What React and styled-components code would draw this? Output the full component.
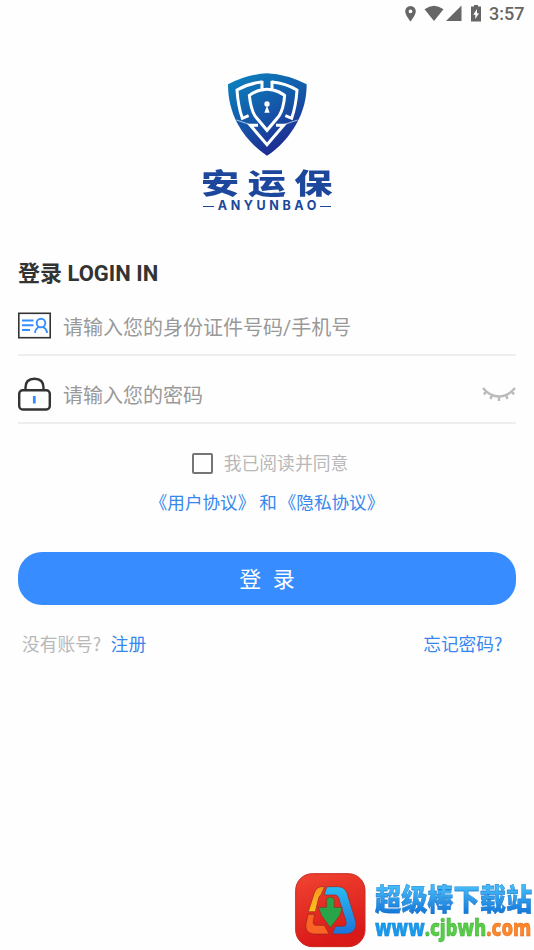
import React from "react";
import styled, { createGlobalStyle } from "styled-components";

const Global = createGlobalStyle`
  * { box-sizing: border-box; }
  body { margin: 0; background: #fff; overflow: hidden; }
`;

const Screen = styled.div`
  width: 534px;
  height: 950px;
  display: flex;
  flex-direction: column;
  background: #fefefe;
  font-family: Roboto, "Noto Sans CJK SC", sans-serif;
  white-space: nowrap;
`;

const StatusBar = styled.header`
  height: 28px;
  padding-right: 9px;
  display: flex;
  justify-content: flex-end;
  align-items: center;
  color: #666;
`;

const Clock = styled.span`
  width: 36px;
  margin-left: 7px;
  font-size: 18px;
  font-weight: 500;
  line-height: 28px;
`;

const Brand = styled.div`
  height: 232px;
  padding-top: 44px;
  display: flex;
  flex-direction: column;
  align-items: center;
  color: #1c479c;
`;

const BrandName = styled.div`
  margin: 10px 0 0 8px;
  height: 32px;
  font-family: "Noto Sans CJK SC", sans-serif;
  font-size: 31px;
  font-weight: 900;
  line-height: 29px;
  letter-spacing: 7px;
  transform: scaleX(1.23) scaleY(0.92);
`;

const BrandLatin = styled.div`
  height: 14px;
  display: flex;
  align-items: center;
  gap: 4px;
  font-family: Inter, sans-serif;
  font-size: 12.5px;
  font-weight: 700;
  line-height: 14px;
`;

const Spaced = styled.span`
  letter-spacing: 3.6px;
  margin-right: -3.6px;
`;

const Rule = styled.i`
  width: 11px;
  height: 1px;
  background: #1c479c;
`;

const Form = styled.main`
  padding: 0 18px;
  display: flex;
  flex-direction: column;
`;

const Title = styled.h1`
  margin: 0;
  height: 27px;
  font-size: 22px;
  line-height: 27px;
  font-weight: 700;
  color: #333;
`;

const Field = styled.label`
  height: ${(p) => p.$height}px;
  padding-top: ${(p) => p.$top}px;
  border-bottom: 2px solid #eee;
  display: flex;
  align-items: center;
  gap: 12px;
  color: #999;
  font-size: 20px;
  line-height: 28px;
`;

const FieldText = styled.span`
  flex: 1;
  padding-top: ${(p) => p.$drop}px;
`;

const Agreement = styled.div`
  margin-top: 28px;
  height: 24px;
  padding-left: 6px;
  display: flex;
  justify-content: center;
  align-items: center;
  gap: 11px;
  font-size: 17.8px;
  line-height: 24px;
  color: #b8b8b8;
`;

const Checkbox = styled.span`
  width: 21px;
  height: 21px;
  margin-bottom: 2px;
  border: 2px solid #757575;
  border-radius: 2px;
`;

const Policies = styled.div`
  margin-top: 15px;
  height: 25px;
  display: flex;
  justify-content: center;
  font-size: 17.6px;
  line-height: 25px;
  color: #3787ec;
`;

const PolicyName = styled.a`
  display: flex;
`;

const Conjunction = styled.span`
  margin: 0 9px 0 11px;
`;

const Bracket = styled.span`
  display: flex;
  width: 10.5px;
  justify-content: ${(p) => (p.$open ? "flex-end" : "flex-start")};
`;

const LoginButton = styled.button`
  margin-top: 36px;
  height: 53px;
  padding: 0;
  border: 0;
  border-radius: 24px;
  background: #378dff;
  color: #fff;
  font-family: inherit;
  font-size: 22px;
  line-height: 55px;
  word-spacing: 6px;
`;

const Footer = styled.div`
  margin-top: 28px;
  padding: 0 12px 0 4px;
  height: 25px;
  display: flex;
  font-size: 17.7px;
  line-height: 25px;
  color: #b8b8b8;
`;

const Link = styled.a`
  color: #3787ec;
  margin-left: ${(p) => (p.$end ? "auto" : "8px")};
`;

const QuestionMark = styled.span`
  display: inline-block;
  width: 10px;
  font-family: "Noto Sans CJK SC", sans-serif;
  line-height: 20px;
`;

const Watermark = styled.aside`
  margin-top: auto;
  height: 78px;
  padding-left: 294px;
  display: flex;
  gap: 8px;

  svg { flex: none; }
`;

const SiteText = styled.div`
  padding-top: 9px;
  display: flex;
  flex-direction: column;
`;

const SiteName = styled.div`
  width: 157px;
  height: 35px;
  font-family: "Noto Sans CJK SC", sans-serif;
  font-size: 26.2px;
  line-height: 35px;
  font-weight: 900;
  transform: scaleY(1.12);
  background: linear-gradient(#45baf8 20%, #167bdb 85%);
  background-clip: text;
  color: transparent;
  -webkit-text-stroke: 0.3px #176bc2;
`;

const SiteUrl = styled.div`
  display: flex;
  width: 156px;
  height: 26px;
  font-family: "Open Sans", sans-serif;
  font-size: 22.5px;
  line-height: 24px;
  font-weight: 800;
  transform: scaleX(0.81);
  transform-origin: left;
`;

const UrlPart = styled.span`
  color: ${(p) => p.$color};
  -webkit-text-stroke: 0.4px ${(p) => p.$edge};
`;

const Shield = () => (
  <svg width="83" height="85" viewBox="35 20 249 255">
    <defs>
      <linearGradient id="shield" x1="0.2" y1="0" x2="0.75" y2="1">
        <stop offset="0" stopColor="#0b7fbd" />
        <stop offset="0.5" stopColor="#1555a7" />
        <stop offset="1" stopColor="#20208d" />
      </linearGradient>
    </defs>
    <path d="M158 24Q98 27 41 57C41 100 50 138 70 176C92 215 122 248 158 271C194 248 224 215 246 176C267 138 277 100 277 57Q218 27 158 24Z" fill="url(#shield)" />
    <g fill="none" stroke="#fff" strokeWidth="9" strokeLinejoin="miter">
      <path d="M143 46V73Q121 78 105 90Q109 130 122 152L158 195L194 152Q208 130 211 90Q196 78 173 73V46M143 74Q158 70 173 74" />
      <path d="M143 50Q103 54 68 74Q71 121 84 159L103 151" />
      <path d="M173 50Q214 54 248 74Q245 121 232 159L213 151" />
      <path d="M131 180H108L158 238L208 180H185" />
      <path d="M66 164L108 178M250 164L208 178" strokeWidth="2" />
    </g>
    <circle cx="158" cy="116" r="8" fill="#fff" />
    <path d="M158 121L150 142H166Z" fill="#fff" />
  </svg>
);

const StatusIcons = () => (
  <svg width="79" height="20" viewBox="0 0 79 20" fill="#666">
    <path fillRule="evenodd" d="M7.500 2A5.300 5.300 0 0 0 2.200 7.300C2.200 11.200 7.500 17.500 7.500 17.500S12.800 11.200 12.800 7.300A5.300 5.300 0 0 0 7.500 2ZM7.500 5.400A1.900 1.900 0 1 1 7.500 9.200A1.900 1.900 0 0 1 7.500 5.400Z" />
    <path d="M21.500 5.300Q31 -1.800 40.500 5.300L31 17Z" />
    <path d="M58.500 1.500V17H43Z" />
    <path fillRule="evenodd" d="M71 1H75V2.600H78V17.500H68V2.600H71ZM74 5L70.200 10.800H72.300V15L76 9.200H74Z" />
  </svg>
);

const IdIcon = () => (
  <svg width="33" height="27" viewBox="0 0 33 27" fill="none">
    <rect x="0.8" y="1.300" width="31.400" height="24.400" stroke="#333" strokeWidth="1.600" />
    <path d="M4 8.500H15.500M4 13.200H15.500M4 18H12" stroke="#378dff" strokeWidth="1.900" />
    <circle cx="23" cy="11" r="4.300" stroke="#378dff" strokeWidth="1.900" />
    <path d="M17 20.800Q17.500 16.500 21 15M25 15Q28.500 16.500 29.200 20.800" stroke="#378dff" strokeWidth="1.900" />
  </svg>
);

const LockIcon = () => (
  <svg width="33" height="34" viewBox="0 0 33 34" fill="none">
    <rect x="1.200" y="13.200" width="30.600" height="19.300" rx="3.500" stroke="#333" strokeWidth="2.400" />
    <path d="M7.500 13V10.500C7.500 4.500 11 1.700 16.500 1.700S25.500 4.500 25.500 10.500V13" stroke="#333" strokeWidth="2.400" />
    <path d="M16.300 19V26.500" stroke="#378dff" strokeWidth="2.800" />
  </svg>
);

const EyeClosed = () => (
  <svg width="34" height="18" viewBox="0 0 34 18" fill="none" stroke="#bbb" strokeWidth="2.400">
    <path d="M1 3Q8 11.500 17 11.500T33 3M4 6.500L2 9.500M10 10L8.500 14M17 12V16M24 10L25.500 14M30 6.500L32 9.500" />
  </svg>
);

const SiteLogo = () => (
  <svg width="73" height="76" viewBox="30 20 219 228">
    <defs>
      <linearGradient id="tile" x1="0" y1="0" x2="0.3" y2="1">
        <stop offset="0" stopColor="#f04431" />
        <stop offset="1" stopColor="#d91818" />
      </linearGradient>
      <linearGradient id="gold" x2="0" y2="1">
        <stop offset="0" stopColor="#f6951e" />
        <stop offset="1" stopColor="#ffc31c" />
      </linearGradient>
      <linearGradient id="sky" x2="0" y2="1">
        <stop offset="0" stopColor="#28bdf0" />
        <stop offset="1" stopColor="#1c73dc" />
      </linearGradient>
    </defs>
    <rect x="35" y="25" width="208" height="219" rx="50" fill="url(#tile)" stroke="#c92a22" strokeWidth="3" />
    <g stroke="#9c251f" strokeWidth="2">
      <path d="M122 64L110 90Q106 91 104 98L94 139H73L91 82Q98 64 112 64Z" fill="url(#gold)" />
      <path d="M129 64H164Q180 65 188 80L214 164C221 188 209 205 186 206H145L154 183H179Q189 181 186 168L164 98Q161 89 153 89H120Z" fill="url(#sky)" />
      <path d="M72 147H92L88 166Q85 180 98 180H121L135 206H89Q62 203 66 176Z" fill="#fa6424" />
      <path d="M127 105Q127 95 139 95T151 105V126H175L168 150L139 187L112 150L103 126H127Z" fill="#28a548" />
    </g>
  </svg>
);

const Policy = ({ children }) => (
  <PolicyName>
    <Bracket $open>《</Bracket>
    <span>{children}</span>
    <Bracket>》</Bracket>
  </PolicyName>
);

export default function App() {
  return (
    <Screen>
      <Global />
      <StatusBar>
        <StatusIcons />
        <Clock>3:57</Clock>
      </StatusBar>
      <Brand>
        <Shield />
        <BrandName>安运保</BrandName>
        <BrandLatin>
          <Rule />
          <Spaced>ANYUNBAO</Spaced>
          <Rule />
        </BrandLatin>
      </Brand>
      <Form>
        <Title>登录 LOGIN IN</Title>
        <Field $height={69} $top={9}>
          <IdIcon />
          <FieldText $drop={6}>请输入您的身份证件号码/手机号</FieldText>
        </Field>
        <Field $height={68} $top={10}>
          <LockIcon />
          <FieldText $drop={4}>请输入您的密码</FieldText>
          <EyeClosed />
        </Field>
        <Agreement>
          <Checkbox />
          <span>我已阅读并同意</span>
        </Agreement>
        <Policies>
          <Policy>用户协议</Policy>
          <Conjunction>和</Conjunction>
          <Policy>隐私协议</Policy>
        </Policies>
        <LoginButton>登 录</LoginButton>
        <Footer>
          <span>没有账号<QuestionMark>?</QuestionMark></span>
          <Link>注册</Link>
          <Link $end>忘记密码<QuestionMark>?</QuestionMark></Link>
        </Footer>
      </Form>
      <Watermark>
        <SiteLogo />
        <SiteText>
          <SiteName>超级棒下载站</SiteName>
          <SiteUrl>
            <UrlPart $color="#169bed" $edge="#1478cc">www</UrlPart>
            <UrlPart $color="#56cf46" $edge="#379c31">.cjbwh</UrlPart>
            <UrlPart $color="#ff8728" $edge="#d55b16">.com</UrlPart>
          </SiteUrl>
        </SiteText>
      </Watermark>
    </Screen>
  );
}
